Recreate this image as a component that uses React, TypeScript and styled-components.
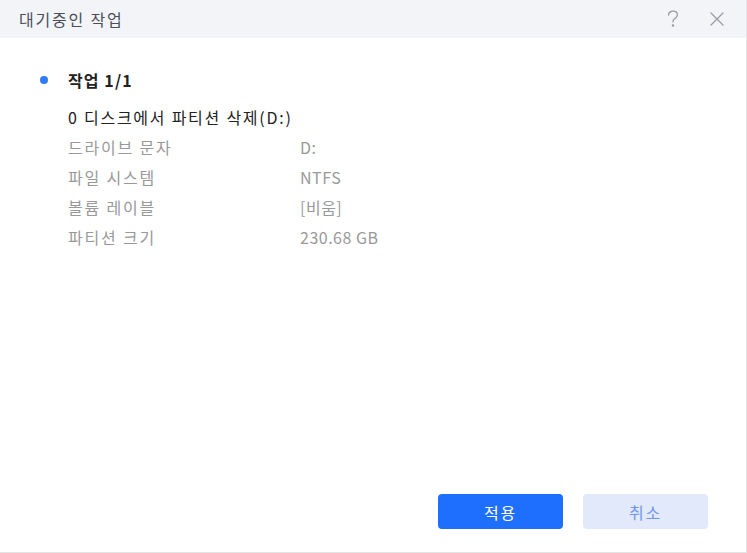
import React from "react";
import styled, { createGlobalStyle } from "styled-components";

const Global = createGlobalStyle`
  html, body { margin: 0; padding: 0; background: #ffffff; }
  body { font-family: "Noto Sans CJK KR", "Noto Sans", sans-serif; }
  * { box-sizing: border-box; }
`;

const Window = styled.div`
  width: 747px;
  height: 553px;
  display: flex;
  flex-direction: column;
  background: #ffffff;
  border-right: 1px solid #e4e4e4;
  border-bottom: 1px solid #e4e4e4;
`;

const Header = styled.div`
  height: 38px;
  flex: none;
  display: flex;
  align-items: center;
  justify-content: space-between;
  background: #f3f4f8;
  padding: 0 20px 0 19px;
`;

const Title = styled.div`
  font-size: 16px;
  letter-spacing: 1.8px;
  color: #4a4f5a;
`;

const HeaderIcons = styled.div`
  display: flex;
  align-items: center;
  gap: 26px;
`;

const IconButton = styled.button`
  border: none;
  background: transparent;
  padding: 0;
  width: 18px;
  height: 18px;
  display: flex;
  align-items: center;
  justify-content: center;
  color: #9a9ca3;
  cursor: pointer;
`;

const Body = styled.div`
  flex: 1;
  display: flex;
  flex-direction: column;
  padding: 32px 40px 0 40px;
`;

const TaskHead = styled.div`
  display: flex;
  align-items: center;
  gap: 20px;
  height: 20px;
`;

const Dot = styled.span`
  width: 8px;
  height: 8px;
  border-radius: 50%;
  background: #2f7cf6;
  flex: none;
`;

const TaskTitle = styled.div`
  font-size: 16px;
  font-weight: 700;
  letter-spacing: 1.1px;
  color: #222222;
`;

const Details = styled.div`
  display: flex;
  flex-direction: column;
  padding-left: 28px;
  margin-top: 12px;
`;

const Operation = styled.div`
  font-size: 16px;
  letter-spacing: 1.75px;
  color: #222222;
  height: 30px;
  line-height: 30px;
`;

const Row = styled.div`
  display: grid;
  grid-template-columns: 232px 1fr;
  height: 30px;
  line-height: 30px;
  font-size: 16px;
`;

const Label = styled.span`
  color: #999999;
  letter-spacing: 1.8px;
`;

const Value = styled.span`
  color: #999999;
  letter-spacing: 0.5px;
`;

const Footer = styled.div`
  display: flex;
  justify-content: flex-end;
  gap: 20px;
  padding: 0 38px 23px 0;
`;

const Button = styled.button<{ $primary?: boolean }>`
  width: 125px;
  height: 35px;
  border: none;
  border-radius: 4px;
  font-family: "Noto Sans CJK KR", "Noto Sans", sans-serif;
  font-size: 16px;
  letter-spacing: 1.8px;
  cursor: pointer;
  background: ${(p) => (p.$primary ? "#1f6fff" : "#e1e9fb")};
  color: ${(p) => (p.$primary ? "#ffffff" : "#6f96ee")};
`;

const rows: [string, string][] = [
  ["드라이브 문자", "D:"],
  ["파일 시스템", "NTFS"],
  ["볼륨 레이블", "[비움]"],
  ["파티션 크기", "230.68 GB"],
];

export default function App() {
  return (
    <>
      <Global />
      <Window>
        <Header>
          <Title>대기중인 작업</Title>
          <HeaderIcons>
            <IconButton aria-label="help">
              <svg width="14" height="18" viewBox="0 0 14 18" fill="none" stroke="currentColor" strokeWidth="1.3" strokeLinecap="round">
                <path d="M2.5 5.2 C2.5 2.6 4.6 1.2 7 1.2 C9.6 1.2 11.4 2.9 11.4 5 C11.4 7.1 9.9 7.9 8.6 8.8 C7.5 9.6 7 10.3 7 11.8" />
                <circle cx="7" cy="15.6" r="0.6" fill="currentColor" />
              </svg>
            </IconButton>
            <IconButton aria-label="close">
              <svg width="16" height="16" viewBox="0 0 16 16" fill="none" stroke="currentColor" strokeWidth="1.3" strokeLinecap="round">
                <path d="M2 2 L14 14 M14 2 L2 14" />
              </svg>
            </IconButton>
          </HeaderIcons>
        </Header>
        <Body>
          <TaskHead>
            <Dot />
            <TaskTitle>작업 1/1</TaskTitle>
          </TaskHead>
          <Details>
            <Operation>0 디스크에서 파티션 삭제(D:)</Operation>
            {rows.map(([k, v]) => (
              <Row key={k}>
                <Label>{k}</Label>
                <Value>{v}</Value>
              </Row>
            ))}
          </Details>
        </Body>
        <Footer>
          <Button $primary>적용</Button>
          <Button>취소</Button>
        </Footer>
      </Window>
    </>
  );
}
